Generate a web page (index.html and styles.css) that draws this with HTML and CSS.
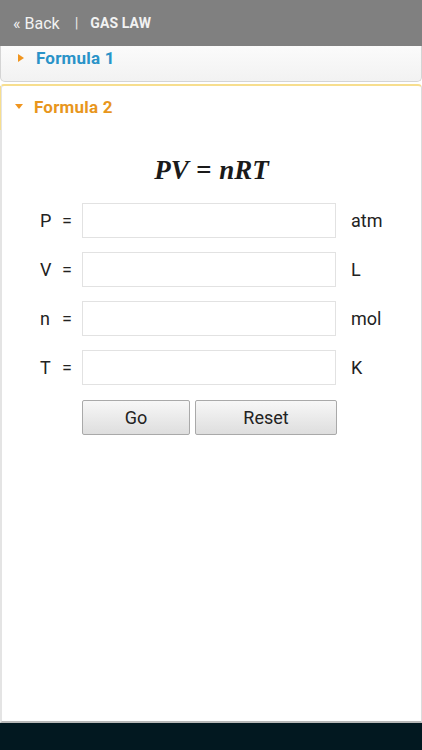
FILE: index.html
```html
<!DOCTYPE html>
<html>
<head>
<meta charset="utf-8">
<link rel="stylesheet" href="styles.css">
</head>
<body>
<div class="app">
  <header class="topbar">
    <span class="back">« Back</span>
    <span class="sep">|</span>
    <span class="title">GAS LAW</span>
  </header>
  <main class="content">
    <div class="panel collapsed">
      <div class="panel-head">
        <svg class="tri" width="6" height="8" viewBox="0 0 6 8"><path d="M0 0L6 4L0 8Z" fill="#f0951f"/></svg>
        <span class="ptitle blue">Formula 1</span>
      </div>
    </div>
    <div class="panel open">
      <div class="panel-head">
        <svg class="tri down" width="8" height="6" viewBox="0 0 8 6"><path d="M0 0L8 0L4 5Z" fill="#f0951f"/></svg>
        <span class="ptitle orange">Formula 2</span>
      </div>
      <div class="panel-body">
        <div class="equation">PV = nRT</div>
        <div class="form">
          <div class="row"><span class="lbl">P</span><span class="eq">=</span><input class="field" type="text"><span class="unit">atm</span></div>
          <div class="row"><span class="lbl">V</span><span class="eq">=</span><input class="field" type="text"><span class="unit">L</span></div>
          <div class="row"><span class="lbl">n</span><span class="eq">=</span><input class="field" type="text"><span class="unit">mol</span></div>
          <div class="row"><span class="lbl">T</span><span class="eq">=</span><input class="field" type="text"><span class="unit">K</span></div>
          <div class="buttons"><button class="btn go">Go</button><button class="btn reset">Reset</button></div>
        </div>
      </div>
    </div>
  </main>
  <footer class="navbar"></footer>
</div>
</body>
</html>
```
FILE: styles.css
```css
* { box-sizing: border-box; }
html, body { margin: 0; padding: 0; }
body { width: 422px; height: 750px; overflow: hidden; font-family: Roboto, "Liberation Sans", sans-serif; background: #fff; }
.app { display: flex; flex-direction: column; height: 750px; }
.topbar { height: 46px; flex: 0 0 46px; background: #808080; display: flex; align-items: center; padding-left: 13px; color: #f2f2f2; }
.back { font-size: 16px; }
.sep { font-size: 15px; margin-left: 15px; color: #e6e6e6; }
.title { font-size: 14px; font-weight: bold; margin-left: 12px; letter-spacing: 0.1px; }
.content { flex: 1; display: flex; flex-direction: column; gap: 2px; min-height: 0; }
.panel.collapsed { height: 36px; border: 1px solid #d4d4d4; border-top: none; border-radius: 0 0 5px 5px; background: linear-gradient(#fbfbfb, #f2f2f2); }
.panel-head { display: flex; align-items: center; height: 100%; padding-left: 17px; }
.collapsed .panel-head { padding-bottom: 12px; }
.tri { flex: none; }
.tri.down { margin-left: -2px; }
.ptitle { font-weight: bold; font-size: 17px; margin-left: 12px; letter-spacing: 0.2px; }
.blue { color: #2a93c8; }
.orange { color: #e8961c; }
.panel.open { flex: 1; display: flex; flex-direction: column; border: 1px solid #dcdcdc; border-top: 2px solid #f7de8e; border-left: 2px solid #e4e4e4; border-bottom: 2px solid #b8b8b8; border-radius: 4px 4px 0 0; background: #fff; }
.open .panel-head { height: 44px; flex: 0 0 44px; border-left: 1px solid #f7de8e; margin-left: -2px; padding-left: 16px; padding-bottom: 2px; }
.open .ptitle { margin-left: 11px; }
.panel-body { display: flex; flex-direction: column; align-items: center; padding-top: 25px; }
.equation { font-family: "Liberation Serif", "Times New Roman", serif; font-weight: bold; font-style: italic; font-size: 27px; color: #1a1a1a; height: 30px; line-height: 30px; word-spacing: 1px; }
.form { display: flex; flex-direction: column; gap: 14px; margin-top: 18px; width: 100%; padding-left: 38px; }
.row { display: flex; align-items: center; height: 35px; font-size: 18px; color: #222; }
.lbl { width: 22px; }
.eq { width: 20px; }
.field { width: 254px; height: 35px; border: 1px solid #e2e2e2; margin: 0; padding: 0; background: #fff; outline: none; }
.unit { margin-left: 15px; }
.buttons { display: flex; gap: 5px; padding-left: 42px; margin-top: 1px; }
.btn { height: 35px; font-family: Roboto, "Liberation Sans", sans-serif; font-size: 18px; color: #222; border: 1px solid #a9a9a9; border-radius: 2px; background: linear-gradient(#f7f7f7, #dedede); padding: 0; }
.go { width: 108px; }
.reset { width: 142px; }
.navbar { height: 27px; flex: 0 0 27px; background: #021820; }
```
